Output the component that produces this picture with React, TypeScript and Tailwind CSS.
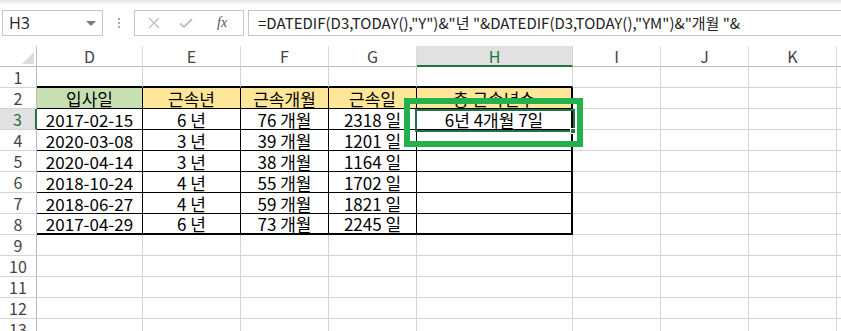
import React from 'react';

const FONT = "font-['Noto_Sans_CJK_KR','Noto_Sans',sans-serif]";

const colWidths = ['w-[106px]', 'w-[98px]', 'w-[88px]', 'w-[88px]', 'w-[156px]', 'w-[88px]', 'w-[88px]', 'w-[88px]'];
const colLetters = ['D', 'E', 'F', 'G', 'H', 'I', 'J', 'K'];

const headers = ['입사일', '근속년', '근속개월', '근속일', '총 근속년수'];

const data: string[][] = [
  ['2017-02-15', '6 년', '76 개월', '2318 일', '6년 4개월 7일'],
  ['2020-03-08', '3 년', '39 개월', '1201 일', ''],
  ['2020-04-14', '3 년', '38 개월', '1164 일', ''],
  ['2018-10-24', '4 년', '55 개월', '1702 일', ''],
  ['2018-06-27', '4 년', '59 개월', '1821 일', ''],
  ['2017-04-29', '6 년', '73 개월', '2245 일', ''],
];

const RowHead: React.FC<{ n: number; selected?: boolean }> = ({ n, selected }) => (
  <div
    className={`w-[37px] shrink-0 h-full flex items-center justify-center text-[16px] leading-[20px] border-b border-[#d4d4d4] ${
      selected ? 'bg-[#e1e1e1] text-[#217346] border-r-2 border-r-[#217346]' : 'bg-white text-[#444] border-r border-r-[#bcbcbc]'
    }`}
  >
    {n}
  </div>
);

const Cell: React.FC<{
  w: string;
  cls?: string;
  children?: React.ReactNode;
}> = ({ w, cls = 'border-r border-b border-[#d4d4d4]', children }) => (
  <div className={`${w} shrink-0 h-full flex items-center justify-center text-[17px] leading-[19px] text-black whitespace-nowrap ${cls}`}>
    {children}
  </div>
);

const App: React.FC = () => {
  const rowNums = [1, 2, 3, 4, 5, 6, 7, 8, 9, 10, 11, 12, 13];

  const cellClass = (row: number, col: number) => {
    // col 0..4 = D..H 가 표 영역 (2~8행)
    const inTable = row >= 2 && row <= 8 && col <= 4;
    if (row === 1 && col <= 4) return 'border-r border-r-[#d4d4d4] border-b-2 border-b-black';
    if (!inTable) return 'border-r border-b border-[#d4d4d4]';
    const r = col === 4 ? 'border-r-2 border-r-black' : 'border-r border-r-black';
    const b = row === 8 ? 'border-b-2 border-b-black' : 'border-b border-b-black';
    let bg = '';
    if (row === 2) bg = col === 0 ? 'bg-[#c6e0b4]' : 'bg-[#ffe699]';
    return `${r} ${b} ${bg}`;
  };

  const cellText = (row: number, col: number) => {
    if (col > 4) return '';
    if (row === 2) return headers[col];
    if (row >= 3 && row <= 8) return data[row - 3][col];
    return '';
  };

  return (
    <div className={`relative w-[841px] h-[331px] overflow-hidden bg-white ${FONT}`}>
      {/* 수식 입력줄 */}
      <div className="h-[5px] bg-gradient-to-b from-[#e4e4e4] to-white" />
      <div className="h-[41px] flex items-start pt-[5px] pl-[2px]">
        <div className="w-[101px] h-[26px] border border-[#c6c6c6] flex items-center justify-between pl-[6px] pr-[6px]">
          <span className="text-[16px] leading-[20px] text-[#222] font-['Open_Sans','Noto_Sans',sans-serif]">H3</span>
          <span className="w-0 h-0 border-l-[5px] border-r-[5px] border-t-[5px] border-l-transparent border-r-transparent border-t-[#7a7a7a] mt-[1px]" />
        </div>
        <div className="w-[31px] h-[26px] flex flex-col items-center justify-center gap-[2px]">
          <span className="w-[2px] h-[2px] bg-[#a8a8a8]" />
          <span className="w-[2px] h-[2px] bg-[#a8a8a8]" />
          <span className="w-[2px] h-[2px] bg-[#a8a8a8]" />
        </div>
        <div className="w-[110px] h-[26px] border border-[#c6c6c6] flex items-center pl-[13px]">
          <svg width="12" height="12" viewBox="0 0 12 12" className="mr-[19px]">
            <path d="M1 1 L11 11 M11 1 L1 11" stroke="#c0c0c0" strokeWidth="1.3" />
          </svg>
          <svg width="14" height="12" viewBox="0 0 14 12" className="mr-[24px]">
            <path d="M1 6.5 L5 10 L13 2" stroke="#c0c0c0" strokeWidth="2" fill="none" />
          </svg>
          <span className="italic text-[14px] leading-[18px] text-[#555] font-['Liberation_Serif',serif]">fx</span>
        </div>
        <div className="ml-[4px] flex-1 h-[26px] border border-[#c6c6c6] border-r-0 flex items-center pl-[9px] text-[15px] leading-[20px] text-[#222] whitespace-nowrap overflow-hidden">
          {'=DATEDIF(D3,TODAY(),"Y")&"년 "&DATEDIF(D3,TODAY(),"YM")&"개월 "&'}
        </div>
      </div>

      {/* 열 머리글 */}
      <div className="h-[21px] flex">
        <div className="w-[37px] shrink-0 h-full border-r border-b border-[#bcbcbc] flex items-end justify-end pr-[2px] pb-[2px]">
          <svg width="12" height="12" viewBox="0 0 12 12">
            <path d="M12 0 L12 12 L0 12 Z" fill="#dcdcdc" />
          </svg>
        </div>
        {colLetters.map((l, i) => (
          <div
            key={l}
            className={`${colWidths[i]} shrink-0 h-full flex items-center justify-center text-[16px] leading-[20px] ${
              l === 'H'
                ? 'bg-[#e1e1e1] text-[#217346] border-r border-r-[#d4d4d4] border-b-2 border-b-[#217346]'
                : 'text-[#444] border-r border-r-[#dadada] border-b border-b-[#bcbcbc]'
            }`}
          >
            {l}
          </div>
        ))}
        <div className="flex-1 h-full border-b border-[#bcbcbc]" />
      </div>

      {/* 행 */}
      {rowNums.map((r) => (
        <div key={r} className="h-[21px] flex">
          <RowHead n={r} selected={r === 3} />
          {colWidths.map((w, c) => (
            <Cell key={c} w={w} cls={cellClass(r, c)}>
              {cellText(r, c)}
            </Cell>
          ))}
          <div className="flex-1 h-full border-b border-[#d4d4d4]" />
        </div>
      ))}

      {/* 선택된 셀 H3 */}
      <div className="absolute left-[415px] top-[109px] w-[160px] h-[23px] border-2 border-[#217346] pointer-events-none" />
      <div className="absolute left-[570px] top-[128px] w-[6px] h-[6px] bg-[#217346] border border-white pointer-events-none" />

      {/* 강조 표시 */}
      <div className="absolute left-[404px] top-[98px] w-[179px] h-[49px] border-[6px] border-[#22b14c] pointer-events-none" />
    </div>
  );
};

export default App;
